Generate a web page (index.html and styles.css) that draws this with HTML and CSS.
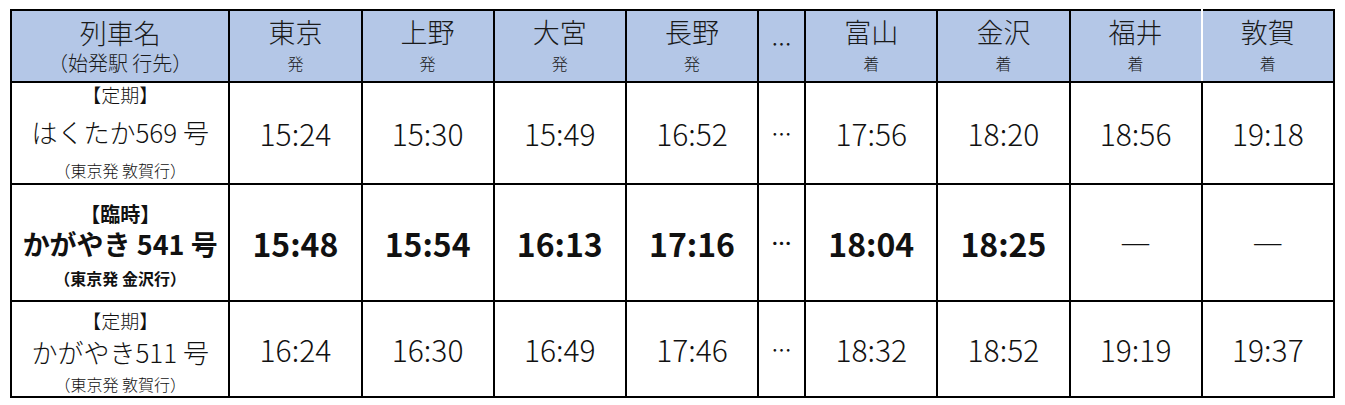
FILE: index.html
```html
<!DOCTYPE html>
<html lang="ja">
<head>
<meta charset="utf-8">
<title>時刻表</title>
<link rel="stylesheet" href="styles.css">
</head>
<body>
<div class="page">
<table class="timetable">
  <colgroup>
    <col class="c-name">
    <col class="c-st"><col class="c-st"><col class="c-st"><col class="c-st">
    <col class="c-dots">
    <col class="c-st"><col class="c-st"><col class="c-st"><col class="c-st">
  </colgroup>
  <thead>
    <tr class="head-row">
      <th class="name-head"><div class="h-main">列車名</div><div class="h-name-sub">（始発駅 行先）</div></th>
      <th><div class="h-main">東京</div><div class="h-sub">発</div></th>
      <th><div class="h-main">上野</div><div class="h-sub">発</div></th>
      <th><div class="h-main">大宮</div><div class="h-sub">発</div></th>
      <th><div class="h-main">長野</div><div class="h-sub">発</div></th>
      <th class="dots head-dots">…</th>
      <th><div class="h-main">富山</div><div class="h-sub">着</div></th>
      <th><div class="h-main">金沢</div><div class="h-sub">着</div></th>
      <th class="fukui-head"><div class="h-main">福井</div><div class="h-sub">着</div></th>
      <th><div class="h-main">敦賀</div><div class="h-sub">着</div></th>
    </tr>
  </thead>
  <tbody>
    <tr class="row-a">
      <td class="train">
        <div class="t-kind">【定期】</div>
        <div class="t-name">はくたか569 号</div>
        <div class="t-route">（東京発 敦賀行）</div>
      </td>
      <td class="time">15:24</td>
      <td class="time">15:30</td>
      <td class="time">15:49</td>
      <td class="time">16:52</td>
      <td class="dots">…</td>
      <td class="time">17:56</td>
      <td class="time">18:20</td>
      <td class="time">18:56</td>
      <td class="time">19:18</td>
    </tr>
    <tr class="row-b special">
      <td class="train">
        <div class="t-kind">【臨時】</div>
        <div class="t-name">かがやき 541 号</div>
        <div class="t-route">（東京発 金沢行）</div>
      </td>
      <td class="time">15:48</td>
      <td class="time">15:54</td>
      <td class="time">16:13</td>
      <td class="time">17:16</td>
      <td class="dots">…</td>
      <td class="time">18:04</td>
      <td class="time">18:25</td>
      <td class="none">―</td>
      <td class="none">―</td>
    </tr>
    <tr class="row-c">
      <td class="train">
        <div class="t-kind">【定期】</div>
        <div class="t-name">かがやき511 号</div>
        <div class="t-route">（東京発 敦賀行）</div>
      </td>
      <td class="time">16:24</td>
      <td class="time">16:30</td>
      <td class="time">16:49</td>
      <td class="time">17:46</td>
      <td class="dots">…</td>
      <td class="time">18:32</td>
      <td class="time">18:52</td>
      <td class="time">19:19</td>
      <td class="time">19:37</td>
    </tr>
  </tbody>
</table>
</div>
</body>
</html>
```

FILE: styles.css
```css
html, body {
  margin: 0;
  padding: 0;
  background: #ffffff;
}

body {
  font-family: "Noto Sans CJK JP", "Noto Sans", sans-serif;
  color: #111111;
}

.page {
  padding: 9px 0 0 10px;
}

.timetable {
  border-collapse: collapse;
  table-layout: fixed;
  width: 1325px;
}

.c-name { width: 218px; }
.c-st { width: 132px; }
.c-dots { width: 47px; }

.timetable th,
.timetable td {
  border: 2px solid #000000;
  padding: 0;
  text-align: center;
  vertical-align: middle;
}

.timetable thead th {
  background: #b4c7e7;
  font-weight: 300;
  color: #1a1a1a;
}

.timetable thead th.fukui-head {
  border-right-color: #ffffff;
}

.head-row { height: 72px; }
.row-a { height: 102px; }
.row-b { height: 117px; }
.row-c { height: 96px; }

.h-main {
  font-size: 27px;
  line-height: 34px;
}

.h-sub {
  font-size: 16px;
  line-height: 28px;
}

.h-name-sub {
  font-size: 20px;
  line-height: 26px;
}

.dots {
  font-size: 20px;
  font-weight: 400;
}

.timetable thead th.head-dots {
  font-weight: 400;
  padding-bottom: 6px;
}

.train {
  font-weight: 300;
}

.t-kind {
  font-size: 19px;
  line-height: 20px;
}

.t-name {
  font-size: 26px;
  line-height: 54px;
}

.t-route {
  font-size: 16px;
  line-height: 22px;
}

.row-c .train {
  padding-top: 8px;
}

.row-c .t-kind { line-height: 22px; }
.row-c .t-name { line-height: 40px; }
.row-c .t-route { line-height: 24px; }

.time {
  font-size: 30px;
  font-weight: 300;
}

.special .train {
  font-weight: 700;
  padding-top: 10px;
}

.special .t-kind { font-size: 20px; line-height: 24px; }
.special .t-name { font-size: 27px; line-height: 36px; }
.special .t-route { font-size: 16px; line-height: 32px; }

.special .time {
  font-size: 32px;
  font-weight: 700;
}

.special .dots {
  font-weight: 700;
}

.none {
  font-size: 32px;
  font-weight: 300;
}
```
